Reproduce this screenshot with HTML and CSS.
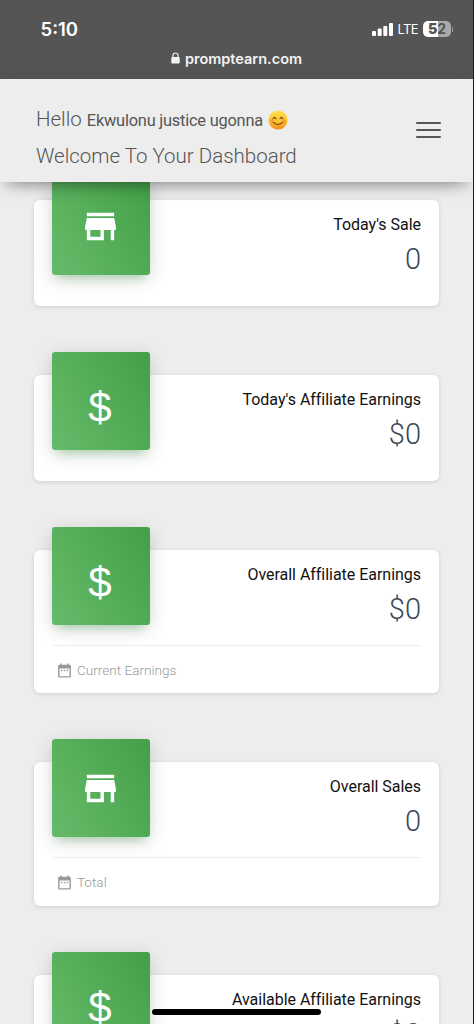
FILE: index.html
```html
<!doctype html>
<html lang="en">
<head>
    <meta charset="UTF-8">
    <meta name="viewport" content="width=device-width, initial-scale=1.0">
    <title>Dashboard</title>
    <link rel="stylesheet" href="styles.css">
</head>
<body>

<svg class="sprite" width="0" height="0">
    <symbol id="store" viewBox="0 0 24 24">
        <path d="M20 4H4v2h16V4zm1 10v-2l-1-5H4l-1 5v2h1v6h10v-6h4v6h2v-6h1zm-9 4H6v-4h6v4z"/>
    </symbol>
    <symbol id="date" viewBox="0 0 24 24">
        <path d="M19 4h-1V2h-2v2H8V2H6v2H5c-1.100 0-2 .9-2 2v14c0 1.100.9 2 2 2h14c1.100 0 2-.9 2-2V6c0-1.100-.9-2-2-2zm0 16H5V9h14v11zM9 11H7v2h2v-2zm4 0h-2v2h2v-2zm4 0h-2v2h2v-2z"/>
    </symbol>
</svg>

<div class="phone">
    <div class="status">
        <div class="status-row">
            <span class="time">5:10</span>
            <div class="status-icons">
                <svg class="signal" width="21" height="13" viewBox="0 0 21 13">
                    <rect x="0" y="8" width="4" height="5" rx="1"/>
                    <rect x="5.700" y="5.500" width="4" height="7.500" rx="1"/>
                    <rect x="11.300" y="3" width="4" height="10" rx="1"/>
                    <rect x="17" y="0" width="4" height="13" rx="1"/>
                </svg>
                <span class="lte">LTE</span>
                <span class="battery"><b>5</b>2</span>
                <span class="battery-tip"></span>
            </div>
        </div>
        <div class="address">
            <svg width="9" height="12" viewBox="0 0 9 12">
                <path d="M2 6V3.500a2.500 2.500 0 0 1 5 0V6" fill="none" stroke="#f2f2f2" stroke-width="1.200"/>
                <rect x="0.300" y="5" width="8.400" height="6.500" rx="1" fill="#f2f2f2"/>
            </svg>
            <span>promptearn.com</span>
        </div>
    </div>

    <div class="navbar">
        <div class="hello">
            <div class="hello-row">
                <span class="hello-word">Hello</span>
                <span class="user">Ekwulonu justice ugonna</span>
                <svg class="smile" width="20" height="20" viewBox="0 0 20 20">
                    <defs>
                        <linearGradient id="face" x1="0" y1="0" x2="0" y2="1">
                            <stop offset="0" stop-color="#ffe04a"/>
                            <stop offset="0.600" stop-color="#fcc32c"/>
                            <stop offset="1" stop-color="#f08a18"/>
                        </linearGradient>
                    </defs>
                    <circle cx="10" cy="10" r="9.600" fill="url(#face)"/>
                    <circle cx="4" cy="11.500" r="2.300" fill="#f4873a" opacity="0.500"/>
                    <circle cx="16" cy="11.500" r="2.300" fill="#f4873a" opacity="0.500"/>
                    <path d="M5 8.800q1.500-2.800 3 0M12 8.800q1.500-2.800 3 0M5.500 12.300q4.500 4.400 9 0" fill="none" stroke="#7a4312" stroke-width="1.100" stroke-linecap="round"/>
                </svg>
            </div>
            <div class="welcome">Welcome To Your Dashboard</div>
        </div>
        <div class="burger"><i></i><i></i><i></i></div>
    </div>

    <div class="cards">
        <div class="card">
            <div class="card-header">
                <div class="card-icon"><svg class="store"><use href="#store"/></svg></div>
                <div class="card-text">
                    <p class="card-category">Today's Sale</p>
                    <h3 class="card-title">0</h3>
                </div>
            </div>
        </div>

        <div class="card">
            <div class="card-header">
                <div class="card-icon"><span class="dollar">$</span></div>
                <div class="card-text">
                    <p class="card-category">Today's Affiliate Earnings</p>
                    <h3 class="card-title">$0</h3>
                </div>
            </div>
        </div>

        <div class="card card-tall">
            <div class="card-header">
                <div class="card-icon"><span class="dollar">$</span></div>
                <div class="card-text">
                    <p class="card-category">Overall Affiliate Earnings</p>
                    <h3 class="card-title">$0</h3>
                </div>
            </div>
            <div class="card-footer"><svg class="date"><use href="#date"/></svg>Current Earnings</div>
        </div>

        <div class="card card-tall">
            <div class="card-header">
                <div class="card-icon"><svg class="store"><use href="#store"/></svg></div>
                <div class="card-text">
                    <p class="card-category">Overall Sales</p>
                    <h3 class="card-title">0</h3>
                </div>
            </div>
            <div class="card-footer"><svg class="date"><use href="#date"/></svg>Total</div>
        </div>

        <div class="card card-tall">
            <div class="card-header">
                <div class="card-icon"><span class="dollar">$</span></div>
                <div class="card-text">
                    <p class="card-category">Available Affiliate Earnings</p>
                    <h3 class="card-title">$0</h3>
                </div>
            </div>
        </div>
    </div>

    <div class="home-bar"></div>
</div>

</body>
</html>
```
FILE: styles.css
```css
* {
    box-sizing: border-box;
}

body {
    margin: 0;
    background: #ededed;
    font-family: Roboto, "Liberation Sans", sans-serif;
}

.sprite {
    display: block;
}

.phone {
    position: relative;
    display: flex;
    flex-direction: column;
    height: 1024px;
    border-right: 1px solid #1c1c1c;
    overflow: hidden;
}

/* status bar */
.status {
    flex: none;
    height: 79px;
    padding-top: 18px;
    background: #555;
    color: #fff;
    font-family: Inter, "Liberation Sans", sans-serif;
}

.status-row {
    display: flex;
    justify-content: space-between;
    align-items: center;
    height: 22px;
    padding: 0 20px 0 40.5px;
}

.time {
    font-size: 18.5px;
    font-weight: 600;
}

.status-icons {
    display: flex;
    align-items: center;
}

.signal {
    fill: #fff;
}

.lte {
    margin: 0 5px 0 4px;
    font-size: 13px;
    letter-spacing: -0.6px;
}

.battery {
    width: 28px;
    height: 16px;
    border-radius: 5px;
    background: linear-gradient(90deg, #fff 52%, #a9a9a9 52%);
    color: #555;
    font-size: 14px;
    font-weight: 700;
    line-height: 16px;
    text-align: center;
}

.battery-tip {
    width: 1px;
    height: 5px;
    margin-left: 1px;
    border-radius: 0 2px 2px 0;
    background: #a0a0a0;
}

.address {
    display: flex;
    justify-content: center;
    align-items: center;
    gap: 5px;
    height: 20px;
    margin-top: 8px;
    color: #f2f2f2;
    font-size: 14.5px;
    font-weight: 600;
}

/* navbar */
.navbar {
    position: relative;
    z-index: 2;
    flex: none;
    display: flex;
    justify-content: space-between;
    height: 103px;
    padding: 22px 32px 0 36px;
    background: #ededed;
    box-shadow: 0 10px 18px -12px rgba(0, 0, 0, .42), 0 3px 20px 0 rgba(0, 0, 0, .08), 0 8px 10px -5px rgba(0, 0, 0, .12);
    color: #555;
}

.hello-row {
    display: flex;
    align-items: baseline;
    height: 36px;
    line-height: 36px;
}

.hello-word,
.welcome {
    font-size: 20.5px;
    font-weight: 300;
}

.welcome {
    line-height: 38px;
}

.user {
    margin: 0 5px;
    font-size: 16.4px;
    letter-spacing: -0.22px;
}

.smile {
    align-self: center;
    margin-top: 2px;
}

.burger {
    display: flex;
    flex-direction: column;
    gap: 5px;
    padding-top: 21px;
}

.burger i {
    width: 25px;
    height: 2px;
    border-radius: 1px;
    background: #555;
}

/* cards */
.cards {
    display: flex;
    flex-direction: column;
    gap: 68.9px;
    padding: 18px 34.5px 0 34.4px;
}

.card {
    flex: none;
    height: 106px;
    padding: 0 17.5px;
    border-radius: 6px;
    background: #fff;
    box-shadow: 0 1px 4px 0 rgba(0, 0, 0, .14);
}

.card-tall {
    height: 143.5px;
}

.card-header {
    display: flex;
    justify-content: space-between;
    height: 95px;
}

.card-icon {
    display: flex;
    justify-content: center;
    align-items: center;
    width: 98px;
    height: 98px;
    margin-top: -23px;
    border-radius: 3px;
    background: linear-gradient(60deg, #66bb6a, #43a047);
    box-shadow: 0 4px 20px 0 rgba(0, 0, 0, .14), 0 7px 10px -5px rgba(76, 175, 80, .4);
    color: #fff;
}

.store {
    width: 41px;
    height: 41px;
    margin: 0 1px -1px 0;
    fill: #fff;
}

.dollar {
    margin: 14px 0 0 -2px;
    font-family: "Liberation Sans", Arial, sans-serif;
    font-size: 42px;
    line-height: 48px;
}

.card-text {
    padding-top: 12px;
    text-align: right;
}

.card-category {
    margin: 0;
    color: #111;
    font-size: 16px;
    letter-spacing: -0.03px;
    line-height: 25px;
}

.card-title {
    margin: 0;
    color: #3c4858;
    font-size: 29px;
    font-weight: 300;
    line-height: 44px;
}

.card-footer {
    display: flex;
    align-items: center;
    height: 48.5px;
    padding-left: 4px;
    border-top: 1px solid #eee;
    color: #999;
    font-size: 13.6px;
    font-weight: 300;
}

.date {
    width: 17px;
    height: 17px;
    margin: 2px 4px 0 0;
    fill: #999;
}

.home-bar {
    position: absolute;
    z-index: 3;
    left: 152px;
    bottom: 9px;
    width: 169px;
    height: 6px;
    border-radius: 3px;
    background: #000;
}
```
